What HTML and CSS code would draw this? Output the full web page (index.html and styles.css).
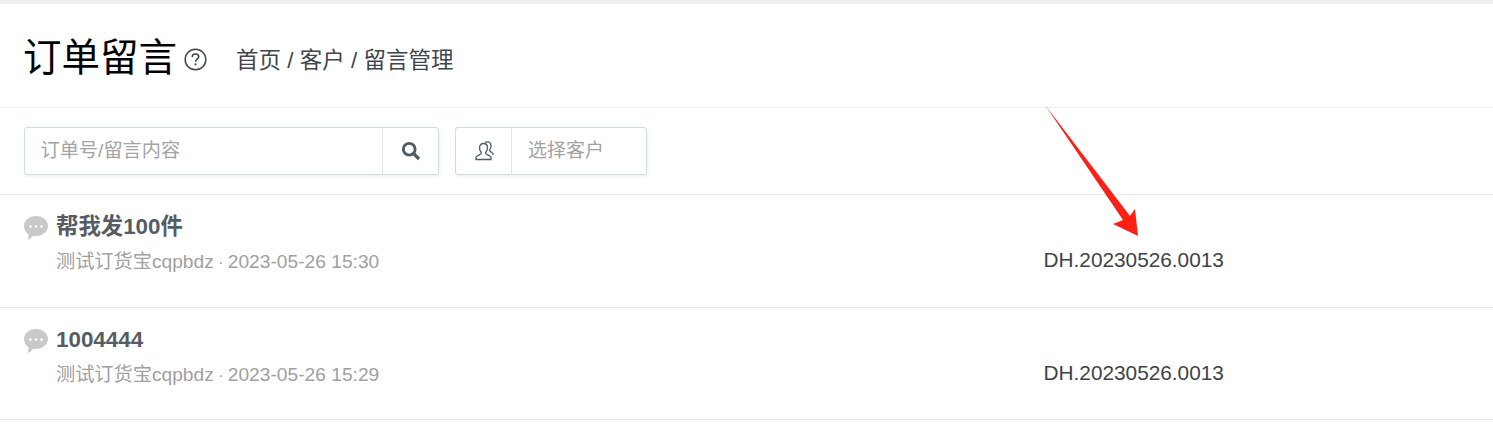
FILE: index.html
```html
<!DOCTYPE html>
<html lang="zh-CN">
<head>
	<meta charset="UTF-8">
	<title>订单留言</title>
	<link rel="stylesheet" href="styles.css">
</head>
<body>
	<div class="page">
		<div class="header">
			<h1 class="title">订单留言</h1>
			<svg class="help" width="23" height="23" viewBox="0 0 22 22">
				<circle cx="11" cy="11" r="9.9" fill="none" stroke="#3f464c" stroke-width="1.4"/>
				<path d="M7.9 8.6c0-1.8 1.3-2.9 3.1-2.9s3.1 1.1 3.1 2.7c0 2.3-3 2.3-3 4.8" fill="none" stroke="#3f464c" stroke-width="1.5"/>
				<rect x="10.2" y="14.7" width="1.7" height="1.8" fill="#3f464c"/>
			</svg>
			<div class="crumb">首页 / 客户 / 留言管理</div>
		</div>
		<div class="toolbar">
			<div class="group search">
				<div class="field">订单号/留言内容</div>
				<div class="addon">
					<svg width="20" height="20" viewBox="0 0 18 18">
						<circle cx="7.4" cy="7.4" r="5.3" fill="none" stroke="#4f5b63" stroke-width="2.6"/>
						<path d="M11.2 11.2l5 5" stroke="#4f5b63" stroke-width="3"/>
					</svg>
				</div>
			</div>
			<div class="group customer">
				<div class="addon">
					<svg width="20" height="20" viewBox="0 0 20 20">
						<path d="M1 18.5v-2.200c0-1.300 3.600-2.300 4.900-3.400.7-.6.4-1.600-.2-2.400-.9-1.100-1.200-2.300-1.200-3.600 0-2.500 1.500-4.400 4-4.400s4 1.900 4 4.400c0 1.300-.4 2.500-1.200 3.600-.6.800-.9 1.800-.2 2.400 1.300 1.100 4.900 2.100 4.900 3.400v2.200z" fill="none" stroke="#4f5b63" stroke-width="1.3"/>
						<path d="M10 1.600c.6-.5 1.300-.8 2.200-.8 2.400 0 3.800 1.800 3.800 4.100 0 1.200-.4 2.300-1 3.200-.5.700-.7 1.500-.1 2 1 .9 3.100 1.600 3.100 2.700v1.200" fill="none" stroke="#4f5b63" stroke-width="1.3"/>
					</svg>
				</div>
				<div class="field">选择客户</div>
			</div>
		</div>
		<div class="list">
			<div class="row">
				<div class="main">
					<svg class="bubble" width="24" height="24" viewBox="0 0 24 24">
						<path d="M12 0C18.700 0 24 4.500 24 10S18.700 20 12 20c-1 0-2-.1-3-.3C7.700 21.500 6 23 3.800 24c.6-1.800.8-3.700.6-5.700C1.700 16.500 0 13.400 0 10 0 4.500 5.300 0 12 0z" fill="#c9c9c9"/>
						<circle cx="6.500" cy="10.500" r="1.300" fill="#fff"/>
						<circle cx="12" cy="10.500" r="1.300" fill="#fff"/>
						<circle cx="17.500" cy="10.500" r="1.300" fill="#fff"/>
					</svg>
					<div>
						<div class="msg">帮我发100件</div>
						<div class="meta">测试订货宝cqpbdz<span class="sep"> · </span>2023-05-26 15:30</div>
					</div>
				</div>
				<div class="order">DH.20230526.0013</div>
			</div>
			<div class="row">
				<div class="main">
					<svg class="bubble" width="24" height="24" viewBox="0 0 24 24">
						<path d="M12 0C18.700 0 24 4.500 24 10S18.700 20 12 20c-1 0-2-.1-3-.3C7.700 21.500 6 23 3.800 24c.6-1.800.8-3.700.6-5.700C1.700 16.500 0 13.400 0 10 0 4.500 5.300 0 12 0z" fill="#c9c9c9"/>
						<circle cx="6.500" cy="10.500" r="1.300" fill="#fff"/>
						<circle cx="12" cy="10.500" r="1.300" fill="#fff"/>
						<circle cx="17.500" cy="10.500" r="1.300" fill="#fff"/>
					</svg>
					<div>
						<div class="msg">1004444</div>
						<div class="meta">测试订货宝cqpbdz<span class="sep"> · </span>2023-05-26 15:29</div>
					</div>
				</div>
				<div class="order">DH.20230526.0013</div>
			</div>
		</div>
		<svg class="arrow" width="100" height="140" viewBox="1045 105 100 140">
			<path d="M1045 105L1130 216 1135 209 1138 236 1113 224 1123 220z" fill="#fe2015"/>
		</svg>
	</div>
</body>
</html>
```

FILE: styles.css
```css
html, body{
	margin: 0;
	padding: 0;
	background: #fff;
}
body{
	font-family: "Liberation Sans", "Noto Sans CJK SC", sans-serif;
	color: #333b42;
}
.page{
	position: relative;
	height: 429px;
	overflow: hidden;
	border-top: 4px solid #eeeeee;
	box-sizing: border-box;
}
.header{
	height: 103px;
	padding: 0 24px;
	display: flex;
	align-items: center;
	border-bottom: 1px solid #eeeeee;
}
.title{
	margin: 4px 0 0 -1px;
	font-size: 38.5px;
	font-weight: normal;
	color: #000;
	height: 40px;
	line-height: 40px;
	overflow: hidden;
}
.help{
	margin-left: 7px;
	margin-top: 7px;
}
.crumb{
	margin-left: 29px;
	margin-top: 4px;
	font-size: 22.5px;
	color: #3f464c;
}
.toolbar{
	height: 87px;
	padding: 19px 24px 0;
	box-sizing: border-box;
	display: flex;
	gap: 16px;
	border-bottom: 1px solid #dfe7e7;
}
.group{
	display: flex;
	height: 48px;
	box-sizing: border-box;
	border: 1px solid #cfdddd;
	border-radius: 3px;
	box-shadow: 1px 2px 3px rgba(0,0,0,0.06);
	background: #fff;
}
.field{
	font-size: 19px;
	line-height: 46px;
	color: #a3a3a3;
	padding-left: 16px;
	flex: 1;
}
.search .field{
	font-size: 19.2px;
	padding-left: 15.5px;
}
.addon{
	display: flex;
	align-items: center;
	justify-content: center;
}
.search{
	width: 415px;
}
.search .addon{
	width: 55px;
	border-left: 1px solid #dfe7e7;
}
.customer{
	width: 192px;
}
.customer .addon{
	width: 56px;
	padding-left: 3px;
	box-sizing: border-box;
	border-right: 1px solid #dfe7e7;
}
.row{
	height: 112px;
	box-sizing: border-box;
	border-bottom: 1px solid #e3e3e3;
	display: flex;
	padding: 19px 0 0 24px;
}
.row:first-child{
	height: 113px;
}
.main{
	width: 1019.5px;
	display: flex;
}
.bubble{
	margin: 2px 8px 0 0;
}
.msg{
	font-size: 22.4px;
	font-weight: bold;
	line-height: 25px;
	color: #555d63;
}
.meta{
	margin-top: 10px;
	font-size: 19.2px;
	line-height: 26px;
	color: #a0a0a0;
}
.sep{
	font-size: 15.7px;
}
.order{
	margin-top: 33px;
	font-size: 20.8px;
	line-height: 26px;
	color: #3d4449;
}
/* the red annotation sits on top of the list */
.arrow{
	position: absolute;
	left: 1045px;
	top: 101px;
}
```
